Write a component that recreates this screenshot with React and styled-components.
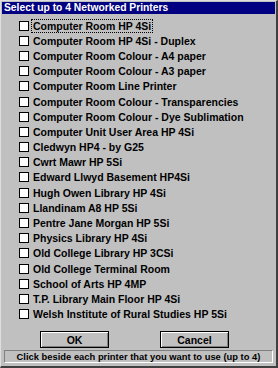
import React, { useState } from "react";
import styled, { createGlobalStyle } from "styled-components";

const printers = [
  "Computer Room HP 4Si",
  "Computer Room HP 4Si - Duplex",
  "Computer Room Colour - A4 paper",
  "Computer Room Colour - A3 paper",
  "Computer Room Line Printer",
  "Computer Room Colour - Transparencies",
  "Computer Room Colour - Dye Sublimation",
  "Computer Unit User Area HP 4Si",
  "Cledwyn HP4 - by G25",
  "Cwrt Mawr HP 5Si",
  "Edward Llwyd Basement HP4Si",
  "Hugh Owen Library HP 4Si",
  "Llandinam A8 HP 5Si",
  "Pentre Jane Morgan HP 5Si",
  "Physics Library HP 4Si",
  "Old College Library HP 3CSi",
  "Old College Terminal Room",
  "School of Arts HP 4MP",
  "T.P. Library Main Floor HP 4Si",
  "Welsh Institute of Rural Studies HP 5Si",
];

export default function App() {
  const [checked, setChecked] = useState({});

  const toggle = (name) => {
    setChecked({ ...checked, [name]: !checked[name] });
  };

  return (
    <>
      <GlobalStyle />
      <Window>
        <TitleBar>Select up to 4 Networked Printers</TitleBar>
        <List>
          {printers.map((name, i) => (
            <Row key={name} onClick={() => toggle(name)}>
              <Box>{checked[name] ? "✓" : ""}</Box>
              <Label focused={i === 0}>{name}</Label>
            </Row>
          ))}
        </List>
        <ButtonRow>
          <Button>OK</Button>
          <Button>Cancel</Button>
        </ButtonRow>
        <StatusBar>
          Click beside each printer that you want to use (up to 4)
        </StatusBar>
      </Window>
    </>
  );
}

//style ----------------
const GlobalStyle = createGlobalStyle`
  body {
    margin: 0;
    background: #c0c0c0;
    font-family: "Liberation Sans", Arial, sans-serif;
  }
`;

const Window = styled.div`
  width: 278px;
  height: 368px;
  box-sizing: border-box;
  background: #c0c0c0;
  border-top: 1px solid #dfdfdf;
  border-left: 1px solid #dfdfdf;
  border-right: 2px solid #404040;
  border-bottom: 2px solid #404040;
  padding: 1px 1px 0 1px;
  display: flex;
  flex-direction: column;
`;

const TitleBar = styled.div`
  height: 12px;
  background: #000080;
  color: #fff;
  font-size: 10.3px;
  font-weight: bold;
  line-height: 12px;
  padding-left: 2px;
  white-space: nowrap;
`;

const List = styled.div`
  margin-top: 4px;
  padding-left: 17px;
  display: flex;
  flex-direction: column;
`;

const Row = styled.div`
  height: 15.2px;
  display: flex;
  align-items: center;
  gap: 3px;
  cursor: pointer;
`;

const Box = styled.span`
  width: 8px;
  height: 8px;
  border: 1px solid #000;
  background: #fff;
  font-size: 8px;
  line-height: 8px;
  text-align: center;
  flex: none;
`;

const Label = styled.span`
  font-size: 10.5px;
  font-weight: bold;
  color: #000;
  line-height: 12px;
  padding: 0 1px;
  white-space: nowrap;
  outline: ${(p) => (p.focused ? "1px dotted #000" : "none")};
`;

const ButtonRow = styled.div`
  display: flex;
  justify-content: center;
  gap: 51px;
  padding-right: 8px;
  margin-top: auto;
  margin-bottom: 2px;
`;

const Button = styled.button`
  width: 69px;
  height: 17px;
  box-sizing: border-box;
  padding: 0;
  background: #c0c0c0;
  border: 1px solid #000;
  box-shadow: inset 1px 1px 0 #fff, inset -1px -1px 0 #808080;
  font-family: "Liberation Sans", Arial, sans-serif;
  font-size: 10.5px;
  font-weight: bold;
  color: #000;
`;

const StatusBar = styled.div`
  height: 13px;
  box-sizing: border-box;
  margin: 0 2px 3px 2px;
  border-top: 1px solid #808080;
  border-left: 1px solid #808080;
  border-right: 1px solid #fff;
  border-bottom: 1px solid #fff;
  font-size: 9.4px;
  font-weight: bold;
  line-height: 11px;
  text-align: center;
  white-space: nowrap;
  overflow: hidden;
`;
